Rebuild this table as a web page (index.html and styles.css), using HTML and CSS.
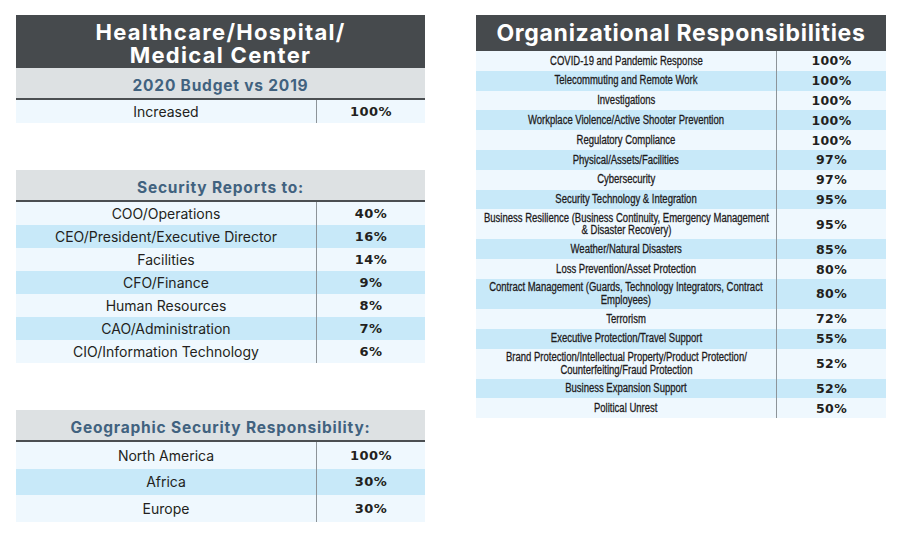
FILE: index.html
```html
<!DOCTYPE html>
<html>
<head>
<meta charset="utf-8">
<link rel="stylesheet" href="styles.css">
</head>
<body>
<div class="page">
  <div class="col-left">
    <section class="block block-first">
      <div class="title">Healthcare/Hospital/<br>Medical Center</div>
      <div class="sub">2020 Budget vs 2019</div>
      <div class="rows">
        <div class="row r23 light"><div class="lbl">Increased</div><div class="val">100%</div></div>
      </div>
    </section>
    <section class="block">
      <div class="sub">Security Reports to:</div>
      <div class="rows">
        <div class="row r23 light"><div class="lbl">COO/Operations</div><div class="val">40%</div></div>
        <div class="row r23 blue"><div class="lbl">CEO/President/Executive Director</div><div class="val">16%</div></div>
        <div class="row r23 light"><div class="lbl">Facilities</div><div class="val">14%</div></div>
        <div class="row r23 blue"><div class="lbl">CFO/Finance</div><div class="val">9%</div></div>
        <div class="row r23 light"><div class="lbl">Human Resources</div><div class="val">8%</div></div>
        <div class="row r23 blue"><div class="lbl">CAO/Administration</div><div class="val">7%</div></div>
        <div class="row r23 light"><div class="lbl">CIO/Information Technology</div><div class="val">6%</div></div>
      </div>
    </section>
    <section class="block">
      <div class="sub">Geographic Security Responsibility:</div>
      <div class="rows">
        <div class="row r27 light"><div class="lbl">North America</div><div class="val">100%</div></div>
        <div class="row r27 blue"><div class="lbl">Africa</div><div class="val">30%</div></div>
        <div class="row r27 light"><div class="lbl">Europe</div><div class="val">30%</div></div>
      </div>
    </section>
  </div>
  <div class="col-right">
    <div class="title title-one">Organizational Responsibilities</div>
    <div class="rows narrow">
      <div class="row rs light"><div class="lbl"><span class="t">COVID-19 and Pandemic Response</span></div><div class="val">100%</div></div>
      <div class="row rs blue"><div class="lbl"><span class="t">Telecommuting and Remote Work</span></div><div class="val">100%</div></div>
      <div class="row rs light"><div class="lbl"><span class="t">Investigations</span></div><div class="val">100%</div></div>
      <div class="row rs blue"><div class="lbl"><span class="t">Workplace Violence/Active Shooter Prevention</span></div><div class="val">100%</div></div>
      <div class="row rs light"><div class="lbl"><span class="t">Regulatory Compliance</span></div><div class="val">100%</div></div>
      <div class="row rs blue"><div class="lbl"><span class="t">Physical/Assets/Facilities</span></div><div class="val">97%</div></div>
      <div class="row rs light"><div class="lbl"><span class="t">Cybersecurity</span></div><div class="val">97%</div></div>
      <div class="row rs blue"><div class="lbl"><span class="t">Security Technology &amp; Integration</span></div><div class="val">95%</div></div>
      <div class="row rd light"><div class="lbl"><span class="t">Business Resilience (Business Continuity, Emergency Management<br>&amp; Disaster Recovery)</span></div><div class="val">95%</div></div>
      <div class="row rs blue"><div class="lbl"><span class="t">Weather/Natural Disasters</span></div><div class="val">85%</div></div>
      <div class="row rs light"><div class="lbl"><span class="t">Loss Prevention/Asset Protection</span></div><div class="val">80%</div></div>
      <div class="row rd blue"><div class="lbl"><span class="t">Contract Management (Guards, Technology Integrators, Contract<br>Employees)</span></div><div class="val">80%</div></div>
      <div class="row rs light"><div class="lbl"><span class="t">Terrorism</span></div><div class="val">72%</div></div>
      <div class="row rs blue"><div class="lbl"><span class="t">Executive Protection/Travel Support</span></div><div class="val">55%</div></div>
      <div class="row rd light"><div class="lbl"><span class="t">Brand Protection/Intellectual Property/Product Protection/<br>Counterfeiting/Fraud Protection</span></div><div class="val">52%</div></div>
      <div class="row rs blue"><div class="lbl"><span class="t">Business Expansion Support</span></div><div class="val">52%</div></div>
      <div class="row rs light"><div class="lbl"><span class="t">Political Unrest</span></div><div class="val">50%</div></div>
    </div>
  </div>
</div>
</body>
</html>
```

FILE: styles.css
```css
* { box-sizing: border-box; }
html, body { margin: 0; padding: 0; background: #ffffff; }
body {
  font-family: Inter, "Liberation Sans", sans-serif;
  color: #231f20;
  width: 900px;
  height: 550px;
  overflow: hidden;
}
.page {
  display: flex;
  gap: 51px;
  padding: 15px 0 0 16px;
}
.col-left {
  width: 409px;
  display: flex;
  flex-direction: column;
  gap: 47px;
}
.col-right {
  width: 410px;
}
.title {
  background: #464a4d;
  color: #ffffff;
  font-weight: 700;
  text-align: center;
  font-size: 22px;
  line-height: 22.5px;
  letter-spacing: 1.3px;
  padding: 6px 0 2px;
}
.title-one {
  font-size: 23px;
  line-height: 36px;
  padding: 0;
  letter-spacing: 0.7px;
}
.sub {
  background: #dde1e3;
  color: #41627f;
  font-weight: 700;
  font-size: 15.5px;
  letter-spacing: 0.8px;
  text-align: center;
  height: 32px;
  line-height: 27px;
  padding-top: 4px;
  border-bottom: 2px solid #4b4f52;
}
.row {
  display: flex;
  align-items: center;
}
.row.light { background: #eff8fe; }
.row.blue { background: #c8e9f9; }
.lbl {
  width: 301px;
  align-self: stretch;
  display: flex;
  align-items: center;
  justify-content: center;
  text-align: center;
  border-right: 1px solid #8d9499;
  font-size: 14px;
  color: #231f20;
}
.val {
  flex: 1;
  text-align: center;
  font-family: "DejaVu Sans", sans-serif;
  font-weight: 700;
  font-size: 13px;
  letter-spacing: 0.4px;
  color: #231f20;
}
.r23 { height: 23px; }
.r27 { height: 26.67px; }
.narrow .lbl {
  font-family: "Liberation Sans", Arial, sans-serif;
  font-size: 12.5px;
  line-height: 12.5px;
  color: #1e1b1c;
}
.narrow .t {
  display: inline-block;
  white-space: nowrap;
  transform: scaleX(0.76);
  transform-origin: center;
  flex: none;
  -webkit-text-stroke: 0.3px #1e1b1c;
}
.narrow .val {
  font-size: 12.5px;
}
.rs { height: 19.8px; }
.rd { height: 30px; }
```
